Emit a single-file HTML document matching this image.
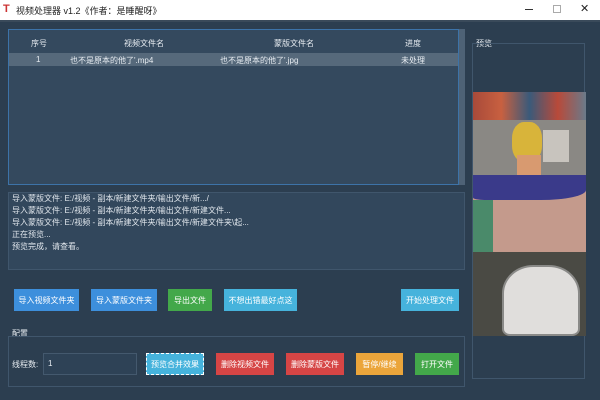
<!DOCTYPE html><html><head><meta charset="utf-8"><style>
*{margin:0;padding:0;box-sizing:border-box}
body{width:600px;height:400px;overflow:hidden;background:#2c3e50;font-family:"Liberation Sans","Noto Sans CJK SC",sans-serif;font-size:8px;color:#e8edf2;position:relative}
.a{position:absolute}
.tb{left:0;top:0;width:600px;height:20px;background:#fff;color:#222;font-size:9px}
.btn{position:absolute;height:22px;color:#fff;font-size:8px;display:flex;align-items:center;justify-content:center}
</style></head><body>
<div class="a tb">
<div class="a" style="left:3px;top:3px;width:11px;height:12px;font-weight:bold;color:#c33;font-size:11px;line-height:12px">T</div>
<div class="a" style="left:16px;top:4px">视频处理器 v1.2《作者：是睡醒呀》</div>
<div class="a" style="left:525px;top:9px;width:8px;height:1px;background:#333"></div>
<div class="a" style="left:553px;top:5px;width:8px;height:8px;border:1px solid #aaa"></div>
<div class="a" style="left:580px;top:2px;font-size:11px">✕</div>
</div>
<div class="a" style="left:0;top:20px;width:600px;height:2px;background:#3a4a5a"></div>
<div class="a" style="left:8px;top:29px;width:451px;height:156px;background:#34495e;border:1px solid #3d73a8"></div>
<div class="a" style="left:459px;top:29px;width:6px;height:156px;background:#4e6276"></div>
<div class="a" style="left:9px;top:53px;width:449px;height:13px;background:#56697b"></div>
<div class="a" style="left:31px;top:38px">序号</div>
<div class="a" style="left:124px;top:38px">视频文件名</div>
<div class="a" style="left:274px;top:38px">蒙版文件名</div>
<div class="a" style="left:405px;top:38px">进度</div>
<div class="a" style="left:36px;top:55px">1</div>
<div class="a" style="left:70px;top:55px">也不是原本的他了'.mp4</div>
<div class="a" style="left:220px;top:55px">也不是原本的他了'.jpg</div>
<div class="a" style="left:401px;top:55px">未处理</div>
<div class="a" style="left:8px;top:192px;width:457px;height:78px;background:#32475c;border:1px solid #40566c"></div>
<div class="a" style="left:12px;top:193px;line-height:12px;color:#e0e6ec">导入蒙版文件: E:/视频 - 副本/新建文件夹/输出文件/新.../<br>导入蒙版文件: E:/视频 - 副本/新建文件夹/输出文件/新建文件...<br>导入蒙版文件: E:/视频 - 副本/新建文件夹/输出文件/新建文件夹\起...<br>正在预览...<br>预览完成，请查看。</div>
<div class="btn" style="left:14px;top:289px;width:65px;background:#3d8fdc">导入视频文件夹</div>
<div class="btn" style="left:91px;top:289px;width:66px;background:#3d8fdc">导入蒙版文件夹</div>
<div class="btn" style="left:168px;top:289px;width:44px;background:#43a84a">导出文件</div>
<div class="btn" style="left:224px;top:289px;width:73px;background:#46b3dc">不想出错最好点这</div>
<div class="btn" style="left:401px;top:289px;width:58px;background:#46b3dc">开始处理文件</div>
<div class="a" style="left:12px;top:328px">配置</div>
<div class="a" style="left:8px;top:336px;width:457px;height:51px;border:1px solid #40566c"></div>
<div class="a" style="left:12px;top:359px">线程数:</div>
<div class="a" style="left:43px;top:353px;width:94px;height:22px;background:#2e4256;border:1px solid #44596e;padding:5px 4px">1</div>
<div class="btn" style="left:146px;top:353px;width:58px;background:#46b3dc;border:1px dashed #fff">预览合并效果</div>
<div class="btn" style="left:216px;top:353px;width:58px;background:#d64545">删除视频文件</div>
<div class="btn" style="left:286px;top:353px;width:58px;background:#d64545">删除蒙版文件</div>
<div class="btn" style="left:356px;top:353px;width:47px;background:#eba53b">暂停/继续</div>
<div class="btn" style="left:415px;top:353px;width:44px;background:#43a84a">打开文件</div>
<div class="a" style="left:476px;top:38px">预览</div>
<div class="a" style="left:472px;top:43px;width:113px;height:336px;border:1px solid #40566c"></div>
<div class="a" style="left:473px;top:92px;width:113px;height:28px;background:linear-gradient(90deg,#a84a3a,#c86040,#3a5a7a,#b84a3a,#6a7a8a)"></div>
<div class="a" style="left:473px;top:120px;width:113px;height:55px;background:#8a8884"></div>
<div class="a" style="left:512px;top:122px;width:30px;height:40px;background:#d8b43a;border-radius:40%"></div>
<div class="a" style="left:517px;top:155px;width:24px;height:20px;background:#d89a70"></div>
<div class="a" style="left:543px;top:130px;width:26px;height:32px;background:#c8c4be"></div>
<div class="a" style="left:473px;top:175px;width:113px;height:77px;background:#c49a8c"></div>
<div class="a" style="left:473px;top:175px;width:113px;height:25px;background:#3a3a8a;border-radius:0 0 40% 10%"></div>
<div class="a" style="left:473px;top:200px;width:20px;height:52px;background:#4a8a6a"></div>
<div class="a" style="left:473px;top:252px;width:113px;height:84px;background:#4a4a44"></div>
<div class="a" style="left:502px;top:265px;width:78px;height:71px;background:#e0dedc;border:2px solid #8a8a88;border-radius:40% 40% 10% 10%"></div>
</body></html>
